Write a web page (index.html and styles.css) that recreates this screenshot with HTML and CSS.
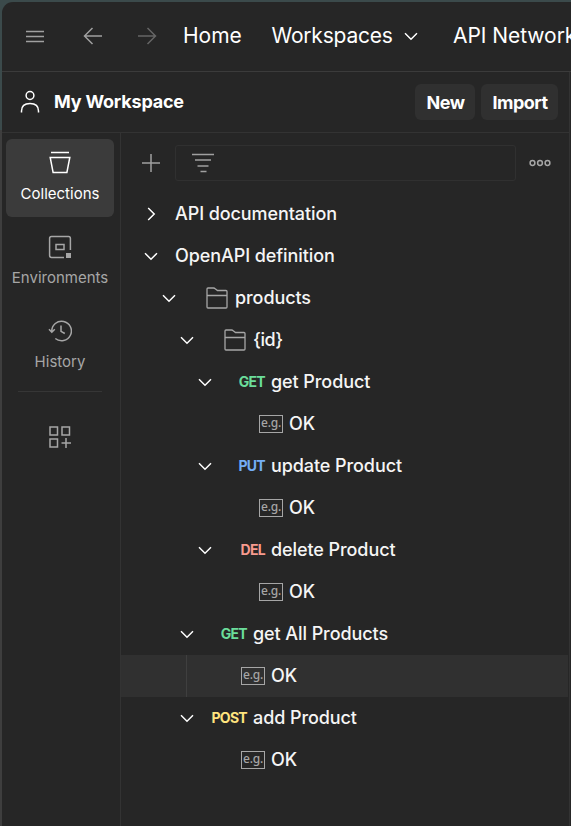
FILE: index.html
```
<!DOCTYPE html>
<html lang="en">
<head>
<meta charset="utf-8">
<title>My Workspace</title>
<link rel="stylesheet" href="styles.css">
</head>
<body>
<svg width="0" height="0" class="defs">
  <symbol id="down" viewBox="0 0 24 24"><path d="M6 9.2l6 6 6-6"/></symbol>
  <symbol id="right" viewBox="0 0 24 24"><path d="M9.2 6l6 6-6 6"/></symbol>
  <symbol id="folder" viewBox="0 0 24 24"><path d="M2 21V3q0-1 1-1h5.500q1 0 1.700.7L12.500 4.500H21q1 0 1 1V21q0 1-1 1H3q-1 0-1-1zM2 9.500h20"/></symbol>
</svg>
<div class="window">
  <header class="nav">
    <svg class="ico dim menu" width="24" height="24" viewBox="0 0 24 24"><path d="M3 7.500h18M3 12.500h18M3 17.500h18"/></svg>
    <svg class="ico dim back" width="24" height="24" viewBox="0 0 24 24"><path d="M21 12H4M11.500 4L3.500 12l8 8"/></svg>
    <svg class="ico faint forward" width="24" height="24" viewBox="0 0 24 24"><path d="M3 12h17M12.500 4l8 8-8 8"/></svg>
    <span class="nav-item home">Home</span>
    <span class="nav-item works">Workspaces</span>
    <svg class="ico nav-chevron" width="24" height="24"><use href="#down"/></svg>
    <span class="nav-item api">API Network</span>
  </header>
  <div class="body">
    <div class="panel">
      <div class="bar">
        <svg class="ico user" width="24" height="24" viewBox="0 0 24 24"><circle cx="12" cy="5.500" r="3.900"/><path d="M3.500 22.500V21q0-7.500 8.500-7.500t8.500 7.500v1.500"/></svg>
        <span class="title">My Workspace</span>
        <button class="btn new">New</button>
        <button class="btn import">Import</button>
      </div>
      <div class="split">
        <nav class="side">
          <div class="tab active">
            <svg class="ico" width="24" height="24" viewBox="0 0 24 24"><path d="M3 1.500h18M2.200 6.500h19.600l-2.900 15H5.100z"/></svg>
            <span>Collections</span>
          </div>
          <div class="tab">
            <svg class="ico" width="24" height="24" viewBox="0 0 24 24"><path d="M16 22.400H3.500q-1.900 0-1.900-1.900V3.500q0-1.900 1.900-1.900h17q1.900 0 1.900 1.900V15M8 9.500h8v5H8z"/><path class="solid" d="M18 18h5v5h-5z"/></svg>
            <span>Environments</span>
          </div>
          <div class="tab">
            <svg class="ico" width="24" height="24" viewBox="0 0 24 24"><path d="M3.800 12.300A9.800 9.800 0 1 1 7.300 19.500M1 10.200l2.800 3 3-3M13 6.500v5.800l3.800 2.200"/></svg>
            <span>History</span>
          </div>
          <div class="rule"></div>
          <svg class="ico more-tabs" width="24" height="24" viewBox="0 0 24 24"><path d="M2 2h7.500v8H2zM14 2h7.500v8H14zM2 14h7.500v8H2zM18 13v10M13.500 18H23"/></svg>
        </nav>
        <main class="main">
          <div class="tools">
            <svg class="ico dim" width="24" height="24" viewBox="0 0 24 24"><path d="M12 3v18M3 12h18"/></svg>
            <div class="filter"><svg class="ico dim" width="24" height="24" viewBox="0 0 24 24"><path d="M1 3.500h22M4 9h16M6.500 15h11M9.500 20.500h6"/></svg></div>
            <svg class="ico dots" width="24" height="24" viewBox="0 0 24 24"><circle cx="4.500" cy="12" r="2.400"/><circle cx="12" cy="12" r="2.400"/><circle cx="19.500" cy="12" r="2.400"/></svg>
          </div>
          <div class="row"><svg class="ico"><use href="#right"/></svg><span class="name top">API documentation</span></div>
          <div class="row"><svg class="ico"><use href="#down"/></svg><span class="name top">OpenAPI definition</span></div>
          <div class="row d1"><svg class="ico"><use href="#down"/></svg><span class="slot pic"><svg class="ico folder"><use href="#folder"/></svg></span><span class="name">products</span></div>
          <div class="row d2"><svg class="ico"><use href="#down"/></svg><span class="slot pic"><svg class="ico folder"><use href="#folder"/></svg></span><span class="name braces">{id}</span></div>
          <div class="row d3"><svg class="ico"><use href="#down"/></svg><span class="slot get">GET</span><span class="name">get Product</span></div>
          <div class="row d4"><i class="gap"></i><span class="slot"><span class="eg">e.g.</span></span><span class="name">OK</span></div>
          <div class="row d3"><svg class="ico"><use href="#down"/></svg><span class="slot put">PUT</span><span class="name">update Product</span></div>
          <div class="row d4"><i class="gap"></i><span class="slot"><span class="eg">e.g.</span></span><span class="name">OK</span></div>
          <div class="row d3"><svg class="ico"><use href="#down"/></svg><span class="slot del">DEL</span><span class="name">delete Product</span></div>
          <div class="row d4"><i class="gap"></i><span class="slot"><span class="eg">e.g.</span></span><span class="name">OK</span></div>
          <div class="row d2"><svg class="ico"><use href="#down"/></svg><span class="slot get">GET</span><span class="name">get All Products</span></div>
          <div class="row selected"><i class="guide"></i><i class="gap"></i><span class="slot"><span class="eg">e.g.</span></span><span class="name">OK</span></div>
          <div class="row d2"><svg class="ico"><use href="#down"/></svg><span class="slot post">POST</span><span class="name">add Product</span></div>
          <div class="row d3"><i class="gap"></i><span class="slot"><span class="eg">e.g.</span></span><span class="name">OK</span></div>
        </main>
      </div>
    </div>
  </div>
</div>
</body>
</html>
```
FILE: styles.css
```
* { box-sizing: border-box; }
body {
  margin: 0;
  height: 826px;
  overflow: hidden;
  background: linear-gradient(#3b4a4b 0 130px, #3e3e3e 130px);
  color: #fff;
  font-family: Inter, "Liberation Sans", sans-serif;
}
.defs { position: absolute; }
.window {
  margin: 2px 0 0 2px;
  height: 824px;
  display: flex;
  flex-direction: column;
  background: #262626;
  border-top-left-radius: 11px;
  overflow: hidden;
}
.ico {
  flex: none;
  width: 24px;
  height: 24px;
  fill: none;
  stroke: #fff;
  stroke-width: 1.5;
}
.dim { stroke: #a0a0a0; }
.faint { stroke: #666; }
.nav {
  flex: none;
  height: 70px;
  display: flex;
  align-items: center;
  padding: 0 0 2px 21px;
  border-bottom: 1px solid #3b3b3b;
  white-space: nowrap;
  overflow: hidden;
}
.back { margin-left: 34px; }
.forward { margin-left: 30px; }
.nav-item { flex: none; font-size: 21px; line-height: 30px; }
.home { width: 59px; margin-left: 24px; }
.works { width: 121px; margin-left: 29.5px; letter-spacing: -0.2px; }
.nav-chevron { margin-left: 6.5px; }
.api { margin-left: 30px; letter-spacing: -0.05px; }
.body { flex: 1; display: flex; min-height: 0; }
.panel {
  width: 568px;
  display: flex;
  flex-direction: column;
  border-right: 1px solid #333;
}
.bar {
  flex: none;
  height: 61px;
  display: flex;
  align-items: center;
  padding: 0 11px 0 16px;
  border-bottom: 1px solid #333;
}
.title {
  margin-left: 12px;
  padding-bottom: 1px;
  font-size: 18px;
  font-weight: 650;
  letter-spacing: -0.2px;
}
.btn {
  height: 36px;
  padding: 0 0 0 1px;
  border: 0;
  border-radius: 6px;
  background: #303030;
  color: #fff;
  font: 650 18px Inter, sans-serif;
  letter-spacing: -0.5px;
}
.new { width: 60px; margin-left: auto; }
.import { width: 77px; margin-left: 6px; }
.split { flex: 1; display: flex; }
.side {
  width: 119px;
  padding: 6px 6px 0 4px;
  border-right: 1px solid #333;
  display: flex;
  flex-direction: column;
}
.tab {
  height: 78px;
  margin-bottom: 6px;
  padding-top: 12px;
  display: flex;
  flex-direction: column;
  align-items: center;
  border-radius: 6px;
  color: #a6a6a6;
  font-size: 15px;
  line-height: 24px;
  gap: 7px;
}
.tab .ico, .more-tabs { stroke: #a6a6a6; }
.tab .solid { fill: #a6a6a6; stroke: none; }
.tab.active { background: #3b3b3b; color: #fff; }
.tab.active .ico { stroke: #fff; }
.rule { height: 1px; margin: 0 12px; background: #363636; }
.more-tabs { margin: 33px auto 0; }
.main { width: 448px; }
.tools {
  height: 60px;
  display: flex;
  align-items: center;
  padding-left: 18px;
}
.filter {
  width: 341px;
  height: 36px;
  margin: 0 12px;
  padding: 5px 15px;
  border: 1px solid #303030;
  border-radius: 3px;
}
.dots { stroke: #a6a6a6; }
.row {
  width: 447px;
  height: 42px;
  display: flex;
  align-items: center;
  padding-left: 18px;
}
.d1 { padding-left: 36px; }
.d2 { padding-left: 54px; }
.d3 { padding-left: 72px; }
.d4 { padding-left: 90px; }
.gap { width: 24px; }
.selected { background: #303030; padding-left: 65px; }
.selected .gap { width: 30px; }
.guide { width: 1px; height: 42px; background: #3f3f3f; }
.slot {
  width: 48px;
  display: flex;
  justify-content: flex-end;
  padding-bottom: 1px;
  font-size: 14px;
  font-weight: 700;
  letter-spacing: -0.7px;
}
.slot.pic { padding-bottom: 0; }
.folder { stroke: #a6a6a6; stroke-width: 1.3; }
.get { color: #6bdd9a; }
.put { color: #74aef6; }
.del { color: #f79a8e; }
.post { color: #ffe47e; }
.eg {
  width: 24px;
  height: 18px;
  margin-top: 1px;
  border: 1.5px solid #a6a6a6;
  color: #a6a6a6;
  font: 500 12px/13px "Noto Sans", sans-serif;
  letter-spacing: -0.2px;
  text-align: center;
}
.name {
  margin-left: 6px;
  padding-bottom: 1px;
  font-size: 18px;
  font-weight: 500;
  letter-spacing: -0.08px;
  white-space: nowrap;
  color: #f5f5f5;
}
.name.top { margin-left: 12px; }
.name.braces { letter-spacing: -0.5px; }
```
